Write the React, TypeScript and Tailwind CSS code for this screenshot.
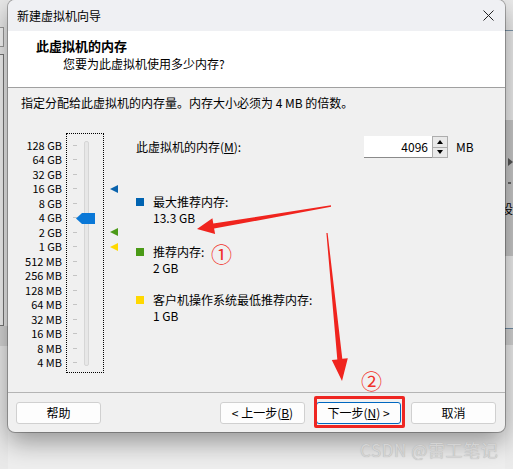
const sizes = ['128 GB', '64 GB', '32 GB', '16 GB', '8 GB', '4 GB', '2 GB', '1 GB', '512 MB', '256 MB', '128 MB', '64 MB', '32 MB', '16 MB', '8 MB', '4 MB']

const font = { fontFamily: '"Noto Sans CJK SC", "Noto Sans", sans-serif' }

function Backdrop() {
  return (
    <>
      {/* left window edge */}
      <div className="absolute left-0 top-0 h-[469px] w-[8px] bg-[#e9e9e9]" />
      <div className="absolute left-0 top-[27px] h-[20px] w-[4px] border border-l-0 border-[#9a9a9a] bg-[#f7f7f7]" />
      <div className="absolute left-0 top-[54px] h-[272px] w-[4px] border border-l-0 border-[#777] bg-[#f2f2f2]" />
      <div className="absolute left-0 top-[326px] h-[20px] w-[8px] bg-[#d4d4d4]" />
      {/* right window edge */}
      <div className="absolute right-0 top-0 h-[469px] w-[8px] bg-[#ebebeb]" />
      <div className="absolute right-0 top-[30px] h-[1px] w-[8px] bg-[#7f97ab]" />
      <div className="absolute right-0 top-[120px] h-[136px] w-[8px] bg-[#c6c6c6]" />
      <div className="absolute right-0 top-[158px] h-0 w-0 border-y-[4px] border-l-[5px] border-y-transparent border-l-[#555]" />
      <div className="absolute right-[2px] top-[182px] h-[2px] w-[3px] bg-[#666]" />
      <div className="absolute right-0 top-[202px] w-[8px] overflow-hidden text-[12px] leading-[14px] text-black">
        <span className="ml-[-4px]">设</span>
      </div>
      <div className="absolute right-0 top-[328px] h-[1px] w-[8px] bg-[#6f8ba3]" />
      <div className="absolute right-0 top-[329px] h-[16px] w-[8px] bg-[#d2d2d2]" />
    </>
  )
}

function Spin() {
  return (
    <div className="flex h-[22px] w-[16px] flex-col border border-[#adadad] bg-[#e9e9e9]">
      <div className="flex flex-1 items-center justify-center border-b border-[#adadad]">
        <div className="h-0 w-0 border-x-[3.5px] border-b-[4px] border-x-transparent border-b-black" />
      </div>
      <div className="flex flex-1 items-center justify-center">
        <div className="h-0 w-0 border-x-[3.5px] border-t-[4px] border-x-transparent border-t-black" />
      </div>
    </div>
  )
}

function Slider() {
  return (
    <div className="flex items-start">
      <div className="mt-[4.75px] flex w-[41px] flex-col text-right text-[11px] text-black">
        {sizes.map((s) => (
          <div key={s} className="h-[14.5px] whitespace-nowrap leading-[14.5px]">
            {s}
          </div>
        ))}
      </div>
      <div className="relative ml-[4px] h-[240px] w-[38px] border border-dotted border-black">
        <div className="absolute left-[6px] top-[3.75px] flex flex-col">
          {sizes.map((s) => (
            <div key={s} className="flex h-[14.5px] items-center">
              <div className="h-[1px] w-[4px] bg-[#c4c4c4]" />
            </div>
          ))}
        </div>
        <div className="absolute left-[17px] top-[7px] h-[225px] w-[5px] rounded-[2px] border border-[#d6d6d6] bg-[#e7e7e7]" />
        <svg className="absolute left-[9px] top-[78.5px]" width="19" height="11" viewBox="0 0 19 11">
          <polygon points="0,5.5 6,0 19,0 19,11 6,11" fill="#0a78d7" />
        </svg>
        <svg className="absolute left-[43px] top-[50.5px]" width="8" height="8" viewBox="0 0 8 8">
          <polygon points="0,4 8,0 8,8" fill="#0a63ad" />
        </svg>
        <svg className="absolute left-[43px] top-[94px]" width="8" height="8" viewBox="0 0 8 8">
          <polygon points="0,4 8,0 8,8" fill="#4c9a18" />
        </svg>
        <svg className="absolute left-[43px] top-[108.5px]" width="8" height="8" viewBox="0 0 8 8">
          <polygon points="0,4 8,0 8,8" fill="#ffd800" />
        </svg>
      </div>
    </div>
  )
}

function Legend({ color, title, value, className }: { color: string; title: string; value: string; className: string }) {
  return (
    <div className={`flex items-start ${className}`}>
      <div className={`mt-[4px] h-[8px] w-[8px] ${color}`} />
      <div className="ml-[9px] flex flex-col text-[12px] leading-[16px] text-black">
        <span>{title}</span>
        <span>{value}</span>
      </div>
    </div>
  )
}

function Button({ children, primary }: { children: React.ReactNode; primary?: boolean }) {
  return (
    <button
      className={`flex h-[22px] w-[85px] items-center justify-center rounded-[3px] border bg-[#fdfdfd] text-[12px] text-black ${
        primary ? 'border-[#0067c0]' : 'border-[#d0d0d0]'
      }`}
    >
      {children}
    </button>
  )
}

export default function App() {
  return (
    <div className="relative h-[469px] w-[513px] overflow-hidden bg-[#eeeeee]" style={font}>
      <Backdrop />

      <div className="absolute left-[8px] top-0 flex h-[432px] w-[497px] flex-col overflow-hidden rounded-[7px] bg-[#f0f0f0] shadow-[0_0_0_1px_rgba(0,0,0,0.28),0_10px_26px_rgba(0,0,0,0.38)]">
        <div className="flex h-[31px] items-center justify-between bg-[#eff0f3] pl-[9px] pr-[11px]">
          <span className="text-[12px] text-black">新建虚拟机向导</span>
          <svg width="11" height="11" viewBox="0 0 11 11">
            <path d="M0.5 0.5 L10.5 10.5 M10.5 0.5 L0.5 10.5" stroke="#222" strokeWidth="1" />
          </svg>
        </div>

        <div className="flex h-[57px] flex-col border-b border-[#a0a0a0] bg-white pl-[28px] pt-[6px]">
          <span className="text-[13px] font-bold leading-[18px] text-black">此虚拟机的内存</span>
          <span className="ml-[27px] text-[12px] leading-[18px] text-black">您要为此虚拟机使用多少内存?</span>
        </div>

        <div className="flex h-[304px] flex-col pl-[13px] pt-[7px]">
          <span className="text-[12px] leading-[16px] text-black">指定分配给此虚拟机的内存量。内存大小必须为 4 MB 的倍数。</span>
          <div className="mt-[22px] flex items-start">
            <Slider />
            <div className="ml-[32px] flex flex-col pt-[3px]">
              <div className="flex items-center">
                <span className="w-[228px] text-[12px] text-black">
                  此虚拟机的内存(<u>M</u>):
                </span>
                <div className="flex h-[22px] w-[68px] items-center justify-end border-b border-[#8a8a8a] bg-white pr-[4px] text-[12px] text-black">
                  4096
                </div>
                <Spin />
                <span className="ml-[8px] text-[12px] text-black">MB</span>
              </div>
              <Legend className="mt-[36px]" color="bg-[#0063b1]" title="最大推荐内存:" value="13.3 GB" />
              <Legend className="mt-[18px]" color="bg-[#4a9a16]" title="推荐内存:" value="2 GB" />
              <Legend className="mt-[16px]" color="bg-[#ffd800]" title="客户机操作系统最低推荐内存:" value="1 GB" />
            </div>
          </div>
        </div>

        <div className="flex h-[40px] items-start border-t border-[#b4b4b4] pl-[8px] pr-[9px] pt-[9px]">
          <Button>帮助</Button>
          <div className="ml-auto flex gap-[11px]">
            <Button>
              &lt; 上一步(<u>B</u>)
            </Button>
            <Button primary>
              下一步(<u>N</u>) &gt;
            </Button>
          </div>
          <div className="ml-[10px]">
            <Button>取消</Button>
          </div>
        </div>
      </div>

      {/* annotations */}
      <div className="absolute left-[314px] top-[396px] h-[32px] w-[91px] rounded-[2px] border-[3px] border-[#ee2622]" />
      <span className="absolute left-[211px] top-[240px] text-[21px] leading-[26px] text-[#f0302a]">①</span>
      <span className="absolute left-[361px] top-[367px] text-[21px] leading-[26px] text-[#f0302a]">②</span>
      <svg className="absolute left-0 top-0" width="513" height="469" viewBox="0 0 513 469">
        <polygon
          points="330.9,205.3 213.3,223.6 212.4,218.2 197,229 215.1,234 214.1,228.6 331.1,206.7"
          fill="#f0241e"
        />
        <polygon
          points="326.4,233.1 337.3,359.4 331.8,359.9 342,381 347.8,358.3 342.3,358.8 327.6,232.9"
          fill="#f0241e"
        />
      </svg>
      <span className="absolute left-[360px] top-[439px] text-[17px] leading-[22px] tracking-[0.6px] text-[#d4d4d4] [text-shadow:0_0_1px_#a8a8a8]">
        CSDN @雷工笔记
      </span>
    </div>
  )
}
